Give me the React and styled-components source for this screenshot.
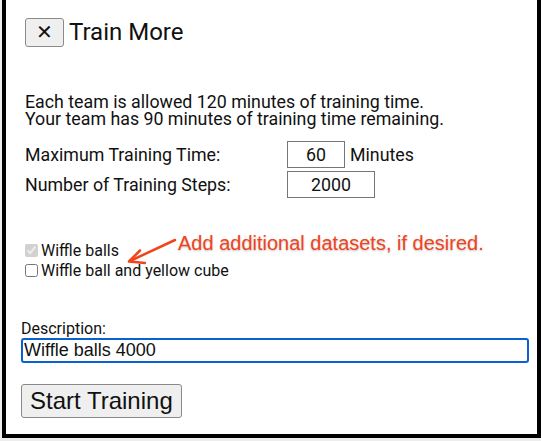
import React from 'react'
import styled, { createGlobalStyle } from 'styled-components'

const GlobalStyle = createGlobalStyle`
  html, body {
    margin: 0;
    padding: 0;
    background: #ededed;
  }
  body {
    font-family: Roboto, "Liberation Sans", sans-serif;
    color: #111;
  }
`

const Dialog = styled.section({
  boxSizing: 'border-box',
  marginLeft: '2px',
  width: '539px',
  height: '438px',
  background: '#fff',
  borderLeft: '4px solid #000',
  borderRight: '4px solid #000',
  borderBottom: '4px solid #000',
  padding: '18px 0 0 15px',
  display: 'flex',
  flexDirection: 'column'
})

const Indented = styled.div({
  paddingLeft: '4px',
  display: 'flex',
  flexDirection: 'column'
})

const TitleBar = styled.div({
  display: 'flex',
  alignItems: 'center',
  gap: '5px'
})

const CloseButton = styled.button({
  boxSizing: 'border-box',
  width: '39px',
  height: '29px',
  padding: 0,
  background: '#efefef',
  border: '1px solid #8a8a8a',
  borderRadius: '3px',
  fontFamily: '"DejaVu Sans", sans-serif',
  fontSize: '20px',
  lineHeight: '27px',
  color: '#111'
})

const Title = styled.h1({
  margin: 0,
  fontSize: '24px',
  fontWeight: 400,
  lineHeight: '29px'
})

const Intro = styled.p({
  margin: '46px 0 0',
  fontSize: '17.8px',
  lineHeight: '17px'
})

const FieldGrid = styled.div({
  marginTop: '14px',
  display: 'grid',
  gridTemplateColumns: '262px auto',
  rowGap: '3px',
  alignItems: 'center'
})

const FieldLabel = styled.span({
  fontSize: '17.8px'
})

const FieldValue = styled.div({
  display: 'flex',
  alignItems: 'center',
  gap: '5px',
  fontSize: '17.8px'
})

const NumberBox = styled.input({
  boxSizing: 'border-box',
  width: props => props.$width,
  height: '27px',
  border: '1px solid #767676',
  borderRadius: 0,
  padding: 0,
  textAlign: 'center',
  fontFamily: 'Roboto, sans-serif',
  fontSize: '17.8px',
  color: '#111'
})

const Datasets = styled.div({
  position: 'relative',
  marginTop: '43px',
  display: 'flex',
  flexDirection: 'column'
})

const CheckRow = styled.label({
  display: 'flex',
  alignItems: 'center',
  gap: '3px',
  height: '19.5px',
  fontSize: '16px',
  color: '#111'
})

const CheckBox = styled.input({
  margin: 0,
  width: '13px',
  height: '13px'
})

const Callout = styled.div({
  position: 'absolute',
  left: '100px',
  top: '-9px',
  display: 'flex',
  alignItems: 'flex-start'
})

const CalloutText = styled.span({
  fontFamily: '"Liberation Sans", Arial, sans-serif',
  fontSize: '20px',
  lineHeight: '23px',
  color: '#f2441c',
  textShadow: '0 1px 2px rgba(0,0,0,0.25)',
  whiteSpace: 'nowrap'
})

const Description = styled.div({
  marginTop: '40px',
  display: 'flex',
  flexDirection: 'column',
  gap: '1px'
})

const DescLabel = styled.label({
  fontSize: '16px',
  lineHeight: '17px'
})

const TextBox = styled.input({
  boxSizing: 'border-box',
  width: '508px',
  height: '25px',
  border: '2px solid #0a5fd1',
  borderRadius: '3px',
  padding: '0 1px',
  fontFamily: '"Liberation Sans", Arial, sans-serif',
  fontSize: '18px',
  color: '#111',
  outline: 'none'
})

const StartButton = styled.button({
  alignSelf: 'flex-start',
  marginTop: '21px',
  boxSizing: 'border-box',
  height: '34px',
  padding: '0 8px',
  background: '#efefef',
  border: '1px solid #8a8a8a',
  borderRadius: '3px',
  fontFamily: '"Liberation Sans", Arial, sans-serif',
  fontSize: '24px',
  color: '#111'
})

const Arrow = () => (
  <svg width="53" height="34" viewBox="0 0 53 34">
    <g stroke="#f2441c" strokeWidth="2.5" strokeLinecap="round" strokeLinejoin="round" fill="none">
      <line x1="50" y1="8" x2="5" y2="29" />
      <polyline points="15,18.5 4,29.5 20,31" />
    </g>
  </svg>
)

const App = () => {
  return (
    <>
      <GlobalStyle />
      <Dialog>
        <Indented>
          <TitleBar>
            <CloseButton>✕</CloseButton>
            <Title>Train More</Title>
          </TitleBar>
          <Intro>
            Each team is allowed 120 minutes of training time.
            <br />
            Your team has 90 minutes of training time remaining.
          </Intro>
          <FieldGrid>
            <FieldLabel>Maximum Training Time:</FieldLabel>
            <FieldValue>
              <NumberBox $width="58px" defaultValue="60" />
              Minutes
            </FieldValue>
            <FieldLabel>Number of Training Steps:</FieldLabel>
            <FieldValue>
              <NumberBox $width="88px" defaultValue="2000" />
            </FieldValue>
          </FieldGrid>
          <Datasets>
            <CheckRow>
              <CheckBox type="checkbox" defaultChecked disabled />
              Wiffle balls
            </CheckRow>
            <CheckRow>
              <CheckBox type="checkbox" />
              Wiffle ball and yellow cube
            </CheckRow>
            <Callout>
              <Arrow />
              <CalloutText>Add additional datasets, if desired.</CalloutText>
            </Callout>
          </Datasets>
        </Indented>
        <Description>
          <DescLabel>Description:</DescLabel>
          <TextBox defaultValue="Wiffle balls 4000" />
        </Description>
        <StartButton>Start Training</StartButton>
      </Dialog>
    </>
  )
}

export default App
